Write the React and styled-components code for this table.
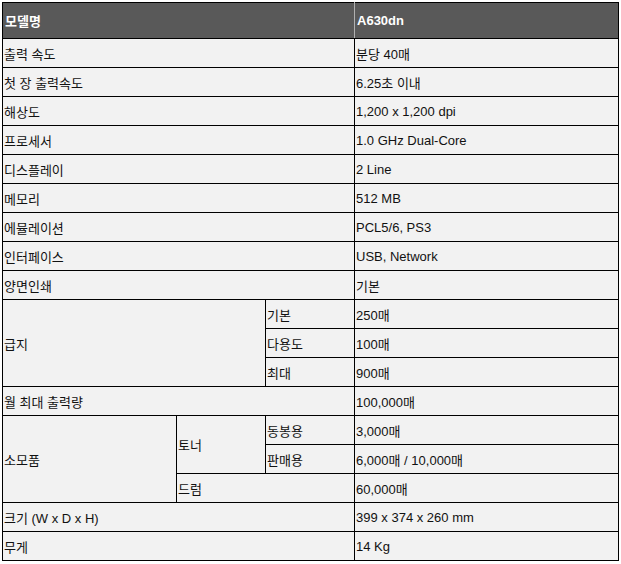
import React from "react";
import styled, { createGlobalStyle } from "styled-components";

const GlobalStyle = createGlobalStyle`
  body {
    margin: 0;
    background: #ffffff;
  }
`;

const Wrap = styled.div`
  padding: 2px 0 0 2px;
`;

const SpecTable = styled.table`
  width: 616px;
  border-collapse: collapse;
  table-layout: fixed;
  font-family: "Liberation Sans", "Noto Sans CJK KR", sans-serif;
  font-size: 13px;
  color: #111;
`;

const HeadCell = styled.th`
  height: 35px;
  padding: 0 2px;
  background: #595959;
  color: #ffffff;
  font-weight: bold;
  text-align: left;
  border: 1px solid #000;
  border-right-color: ${(p) => (p.$divider ? "#b0b0b0" : "#000")};
`;

const Cell = styled.td`
  height: 28px;
  padding: 0 1px;
  background: #f2f2f2;
  border: 1px solid #000;
  vertical-align: middle;
  white-space: nowrap;
`;

const rows = [
  ["출력 속도", "분당 40매"],
  ["첫 장 출력속도", "6.25초 이내"],
  ["해상도", "1,200 x 1,200 dpi"],
  ["프로세서", "1.0 GHz Dual-Core"],
  ["디스플레이", "2 Line"],
  ["메모리", "512 MB"],
  ["에뮬레이션", "PCL5/6, PS3"],
  ["인터페이스", "USB, Network"],
  ["양면인쇄", "기본"],
];

export default function App() {
  return (
    <Wrap>
      <GlobalStyle />
      <SpecTable>
        <colgroup>
          <col style={{ width: 174 }} />
          <col style={{ width: 89 }} />
          <col style={{ width: 89 }} />
          <col style={{ width: 264 }} />
        </colgroup>
        <thead>
          <tr>
            <HeadCell colSpan={3} $divider>
              모델명
            </HeadCell>
            <HeadCell>A630dn</HeadCell>
          </tr>
        </thead>
        <tbody>
          {rows.map(([label, value]) => (
            <tr key={label}>
              <Cell colSpan={3}>{label}</Cell>
              <Cell>{value}</Cell>
            </tr>
          ))}
          <tr>
            <Cell colSpan={2} rowSpan={3}>
              급지
            </Cell>
            <Cell>기본</Cell>
            <Cell>250매</Cell>
          </tr>
          <tr>
            <Cell>다용도</Cell>
            <Cell>100매</Cell>
          </tr>
          <tr>
            <Cell>최대</Cell>
            <Cell>900매</Cell>
          </tr>
          <tr>
            <Cell colSpan={3}>월 최대 출력량</Cell>
            <Cell>100,000매</Cell>
          </tr>
          <tr>
            <Cell rowSpan={3}>소모품</Cell>
            <Cell rowSpan={2}>토너</Cell>
            <Cell>동봉용</Cell>
            <Cell>3,000매</Cell>
          </tr>
          <tr>
            <Cell>판매용</Cell>
            <Cell>6,000매 / 10,000매</Cell>
          </tr>
          <tr>
            <Cell colSpan={2}>드럼</Cell>
            <Cell>60,000매</Cell>
          </tr>
          <tr>
            <Cell colSpan={3}>크기 (W x D x H)</Cell>
            <Cell>399 x 374 x 260 mm</Cell>
          </tr>
          <tr>
            <Cell colSpan={3}>무게</Cell>
            <Cell>14 Kg</Cell>
          </tr>
        </tbody>
      </SpecTable>
    </Wrap>
  );
}
